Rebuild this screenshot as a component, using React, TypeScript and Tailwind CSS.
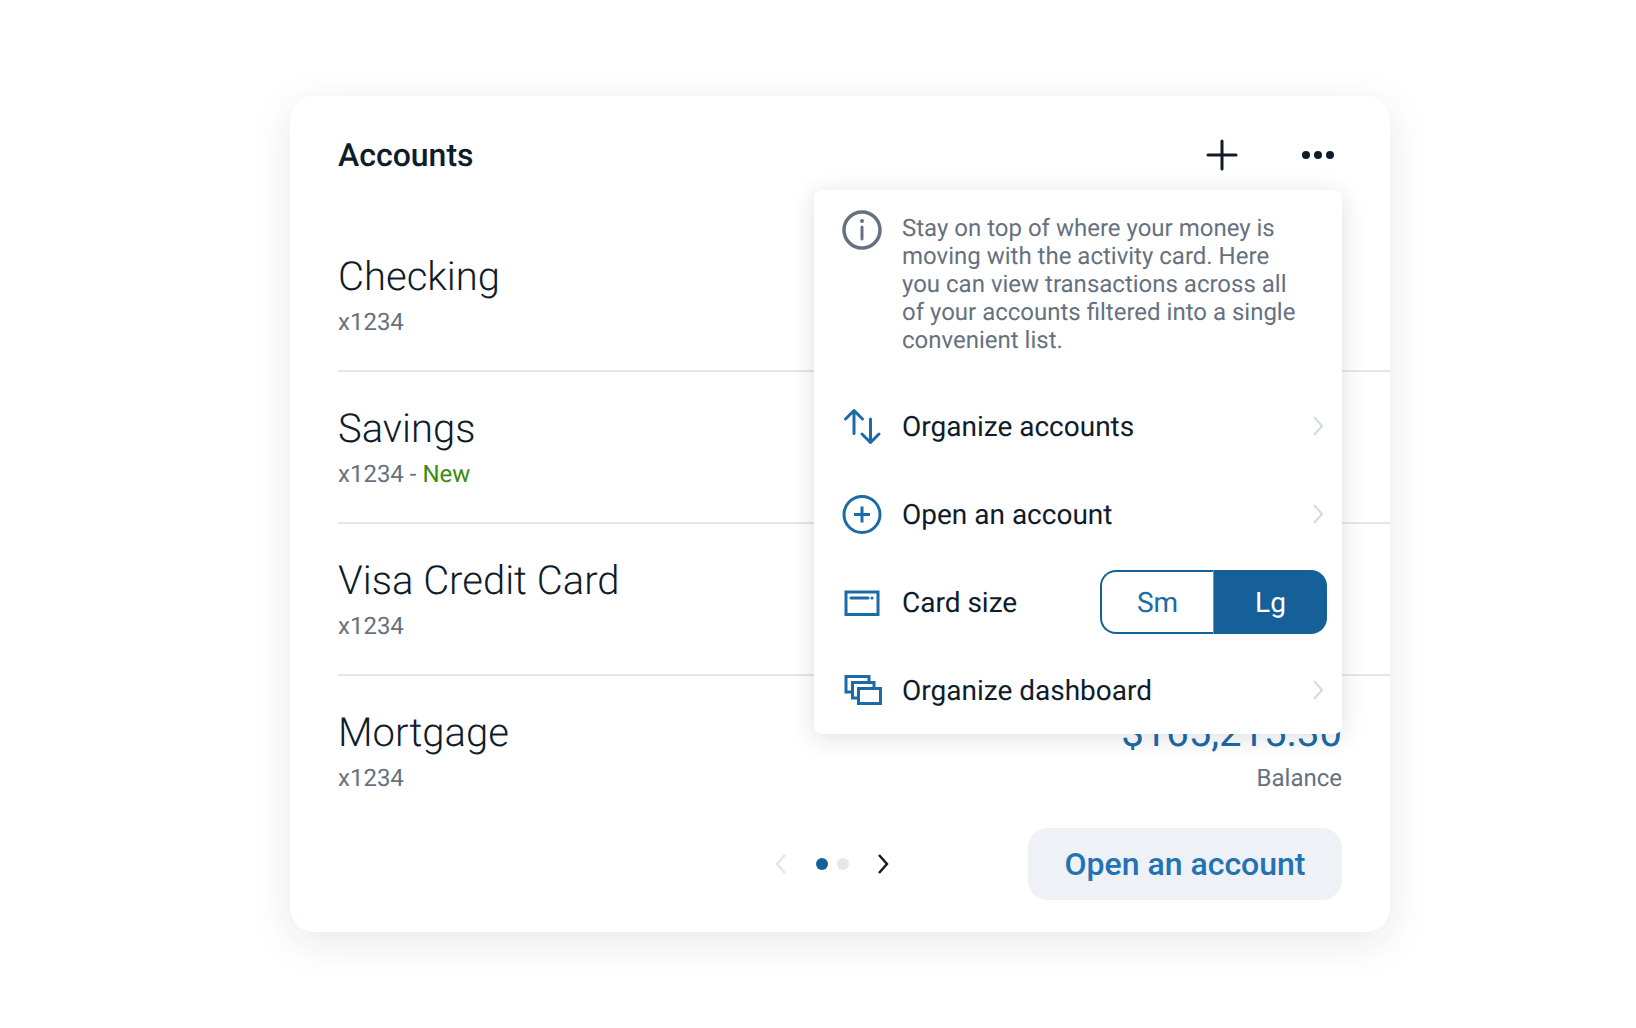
const F = "font-['Roboto',sans-serif] antialiased [text-rendering:geometricPrecision]";

function Row({ name, sub, isNew, last, children }: { name: string; sub: string; isNew?: boolean; last?: boolean; children?: React.ReactNode }) {
  return (
    <div className={`flex h-[152px] justify-between pt-[33px] pr-12 ${last ? "" : "border-b-2 border-[#e5e6e8]"}`}>
      <div>
        <div className="text-[40px] leading-[48px] font-light text-[#0f1c2b]">{name}</div>
        <div className="mt-[5px] text-2xl leading-8 text-[#66717f]">
          {sub}
          {isNew && (
            <>
              {" - "}
              <span className="text-[#3b8c0c]">New</span>
            </>
          )}
        </div>
      </div>
      {children}
    </div>
  );
}

function Chevron({ color = "#d6d9dc", sw = 2, left }: { color?: string; sw?: number; left?: boolean }) {
  return (
    <svg width="12" height="20" viewBox="0 0 12 20" fill="none" stroke={color} strokeWidth={sw}>
      <path d={left ? "M10 1l-8 9 8 9" : "M2 1l8 9-8 9"} />
    </svg>
  );
}

function MenuRow({ icon, label }: { icon: React.ReactNode; label: string }) {
  return (
    <div className="flex h-[88px] items-center pl-7 pr-[18px]">
      <div className="h-10 w-10 shrink-0">{icon}</div>
      <span className="ml-5 flex-1 pt-[2px] text-[28px] text-[#0f1c2b]">{label}</span>
      <Chevron />
    </div>
  );
}

export default function App() {
  return (
    <div className={`${F} h-[1028px] w-full overflow-hidden bg-white pl-[290px] pt-[96px]`}>
      <div className="relative h-[836px] w-[1100px] rounded-[24px] bg-white pl-12 shadow-[0_10px_40px_rgba(20,30,50,0.1)]">
        <div className="flex h-[124px] items-start justify-between pr-12 pt-[39px]">
          <h1 className="text-[32px] leading-10 font-medium text-[#0f1c2b]">Accounts</h1>
          <div className="flex gap-12">
            <button className="flex h-10 w-12 items-center justify-center">
              <svg width="32" height="32" viewBox="0 0 32 32" stroke="#0f1c2b" strokeWidth="3" strokeLinecap="round">
                <path d="M16 2v28M2 16h28" />
              </svg>
            </button>
            <button className="flex h-10 w-12 items-center justify-center">
              <svg width="34" height="10" viewBox="0 0 34 10" fill="#0f1c2b">
                <circle cx="5" cy="5" r="4" />
                <circle cx="17" cy="5" r="4" />
                <circle cx="29" cy="5" r="4" />
              </svg>
            </button>
          </div>
        </div>

        <Row name="Checking" sub="x1234" />
        <Row name="Savings" sub="x1234" isNew />
        <Row name="Visa Credit Card" sub="x1234" />
        <Row name="Mortgage" sub="x1234" last>
          <div className="text-right">
            <div className="text-[40px] leading-[48px] text-[#1c6aa6]">$165,215.30</div>
            <div className="mt-[5px] text-2xl leading-8 text-[#66717f]">Balance</div>
          </div>
        </Row>

        <div className="flex items-center pr-12">
          <div className="ml-[437px] flex items-center">
            <Chevron color="#e3e4e6" sw={2.5} left />
          </div>
          <div className="ml-[29px] flex gap-[9px]">
            <span className="h-3 w-3 rounded-full bg-[#156099]" />
            <span className="h-3 w-3 rounded-full bg-[#e6e7e9]" />
          </div>
          <div className="ml-[28px] flex items-center">
            <Chevron color="#0f1c2b" sw={2.5} />
          </div>
          <button className="ml-auto h-[72px] w-[314px] rounded-[20px] bg-[#eef1f6] text-[32px] font-medium text-[#2272b4]">
            Open an account
          </button>
        </div>

        <div className="absolute left-[524px] top-[94px] h-[544px] w-[528px] rounded-lg bg-white shadow-[0_4px_24px_rgba(20,30,50,0.14)]">
          <div className="flex h-[192px] pl-7 pt-6">
            <svg className="mt-[-5px] shrink-0" width="40" height="42" viewBox="0 0 40 42" fill="none" stroke="#66717f" strokeWidth="3.5">
              <circle cx="20" cy="21" r="18" />
              <path d="M20 18v12" strokeWidth="3" strokeLinecap="round" />
              <circle cx="20" cy="12" r="2" fill="#66717f" stroke="none" />
            </svg>
            <p className="ml-5 w-[400px] text-2xl leading-7 text-[#66717f]">
              Stay on top of where your money is moving with the activity card. Here you can view transactions across all of your accounts filtered into a single convenient list.
            </p>
          </div>
          <MenuRow
            label="Organize accounts"
            icon={
              <svg width="40" height="40" viewBox="0 0 40 40" fill="none" stroke="#1c6aa6" strokeWidth="3" strokeLinecap="round" strokeLinejoin="round">
                <path d="M12 4.5v23M3.5 13l8.5-8.5 8.5 8.5M28.5 13v23.5M20 28l8.5 8.5 8.5-8.5" />
              </svg>
            }
          />
          <MenuRow
            label="Open an account"
            icon={
              <svg width="40" height="40" viewBox="0 0 40 40" fill="none" stroke="#1c6aa6" strokeWidth="3">
                <circle cx="20" cy="20.5" r="18" />
                <path d="M12 20.5h16M20 12.5v16" />
              </svg>
            }
          />
          <div className="flex h-[88px] items-center pl-7 pr-[15px]">
            <svg className="shrink-0" width="40" height="40" viewBox="0 0 40 40" fill="none" stroke="#1c6aa6" strokeWidth="3">
              <rect x="4" y="10" width="32" height="22.5" />
              <path d="M9 16h17" strokeLinecap="round" />
              <circle cx="30" cy="16" r="1.6" fill="#1c6aa6" stroke="none" />
            </svg>
            <span className="ml-5 flex-1 pt-[2px] text-[28px] text-[#0f1c2b]">Card size</span>
            <div className="flex h-16 w-[227px] text-[28px]">
              <span className="flex w-[113px] items-center justify-center rounded-l-2xl border-2 border-r-0 border-[#156099] pt-[2px] text-[#1c6aa6]">Sm</span>
              <span className="flex w-[114px] items-center justify-center rounded-r-2xl border-l border-[#6a9abf] bg-[#156099] pt-[2px] text-white">Lg</span>
            </div>
          </div>
          <MenuRow
            label="Organize dashboard"
            icon={
              <svg width="40" height="40" viewBox="0 0 40 40" fill="none" stroke="#1c6aa6" strokeWidth="3">
                <path d="M10.5 22H4V6.5h23v6M16.5 28h-6V12.5H32v6M16.5 18.5h22v15h-22z" />
              </svg>
            }
          />
        </div>
      </div>
    </div>
  );
}
